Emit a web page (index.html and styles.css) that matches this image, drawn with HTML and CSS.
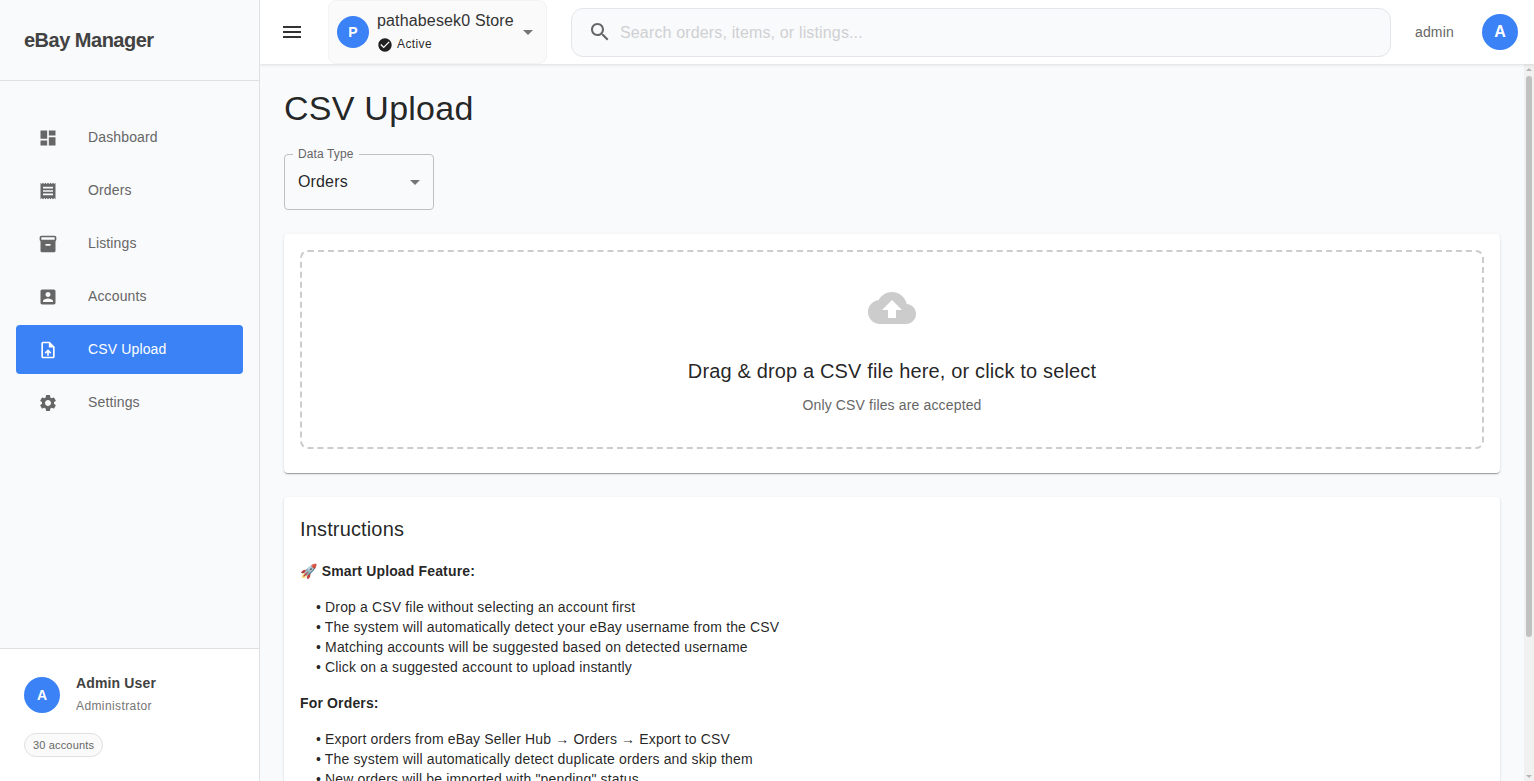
FILE: index.html
```
<!DOCTYPE html>
<html lang="en">
<head>
<meta charset="utf-8">
<title>eBay Manager</title>
<link rel="stylesheet" href="styles.css">
</head>
<body>
<div class="app">
  <aside class="sidebar">
    <div class="brand">eBay Manager</div>
    <nav class="nav">
      <a class="nav-item"><svg viewBox="0 0 24 24"><path d="M3 13h8V3H3v10zm0 8h8v-6H3v6zm10 0h8V11h-8v10zm0-18v6h8V3h-8z"/></svg><span>Dashboard</span></a>
      <a class="nav-item"><svg viewBox="0 0 24 24"><path d="M19.5 3.5 18 2l-1.500 1.500L15 2l-1.500 1.500L12 2l-1.500 1.500L9 2 7.500 3.500 6 2 4.500 3.500 3 2v20l1.500-1.500L6 22l1.500-1.500L9 22l1.500-1.500L12 22l1.500-1.500L15 22l1.500-1.500L18 22l1.500-1.500L21 22V2l-1.500 1.500zM18 17H6v-2h12v2zm0-4H6v-2h12v2zm0-4H6V7h12v2z"/></svg><span>Orders</span></a>
      <a class="nav-item"><svg viewBox="0 0 24 24"><path d="M20 2H4c-1 0-2 .9-2 2v3.010c0 .72.43 1.340 1 1.690V20c0 1.100 1.100 2 2 2h14c.9 0 2-.9 2-2V8.700c.57-.35 1-.97 1-1.690V4c0-1.100-1-2-2-2zm-5 12H9v-2h6v2zm5-7H4V4h16v3z"/></svg><span>Listings</span></a>
      <a class="nav-item"><svg viewBox="0 0 24 24"><path d="M3 5v14c0 1.100.89 2 2 2h14c1.100 0 2-.9 2-2V5c0-1.100-.9-2-2-2H5c-1.110 0-2 .9-2 2zm12 4c0 1.660-1.340 3-3 3s-3-1.340-3-3 1.340-3 3-3 3 1.340 3 3zm-9 8c0-2 4-3.100 6-3.100s6 1.100 6 3.100v1H6v-1z"/></svg><span>Accounts</span></a>
      <a class="nav-item selected"><svg viewBox="0 0 24 24"><path d="M14 2H6c-1.100 0-1.990.9-1.990 2L4 20c0 1.100.89 2 1.990 2H18c1.100 0 2-.9 2-2V8l-6-6zm4 18H6V4h7v5h5v11zM8 15.010l1.410 1.410L11 14.840V19h2v-4.160l1.590 1.590L16 15.010 12.010 11 8 15.010z"/></svg><span>CSV Upload</span></a>
      <a class="nav-item"><svg viewBox="0 0 24 24"><path d="M19.140 12.940c.04-.3.060-.61.060-.94 0-.32-.02-.64-.07-.94l2.030-1.580c.18-.14.230-.41.120-.61l-1.920-3.320c-.12-.22-.37-.29-.59-.22l-2.390.96c-.5-.38-1.030-.7-1.620-.94l-.36-2.540c-.04-.24-.24-.41-.48-.41h-3.840c-.24 0-.43.17-.47.41l-.36 2.540c-.59.24-1.130.57-1.620.94l-2.390-.96c-.22-.08-.47 0-.59.22L2.740 8.870c-.12.210-.08.470.120.610l2.030 1.580c-.05.300-.09.630-.09.940s.02.640.070.940l-2.030 1.580c-.18.140-.23.410-.12.610l1.920 3.320c.12.220.370.290.590.220l2.390-.96c.5.380 1.030.7 1.620.940l.36 2.540c.05.240.240.410.480.410h3.840c.24 0 .44-.17.470-.41l.36-2.540c.59-.24 1.130-.56 1.620-.94l2.390.96c.22.080.470 0 .59-.22l1.920-3.320c.12-.22.070-.47-.12-.61l-2.010-1.580zM12 15.600c-1.980 0-3.600-1.620-3.600-3.600s1.620-3.600 3.600-3.600 3.600 1.620 3.600 3.600-1.620 3.600-3.600 3.600z"/></svg><span>Settings</span></a>
    </nav>
    <div class="profile">
      <div class="profile-row">
        <div class="avatar avatar-profile">A</div>
        <div class="profile-text">
          <div class="profile-name">Admin User</div>
          <div class="profile-role">Administrator</div>
        </div>
      </div>
      <div class="chip">30 accounts</div>
    </div>
  </aside>

  <div class="workspace">
    <header class="topbar">
      <svg class="menu-icon" viewBox="0 0 24 24"><path d="M3 18h18v-2H3v2zm0-5h18v-2H3v2zm0-7v2h18V6H3z"/></svg>
      <div class="store">
        <div class="avatar avatar-store">P</div>
        <div class="store-text">
          <div class="store-name">pathabesek0 Store</div>
          <div class="store-status"><svg viewBox="0 0 24 24"><path d="M12 2C6.480 2 2 6.480 2 12s4.480 10 10 10 10-4.480 10-10S17.520 2 12 2zm-2 15-5-5 1.410-1.410L10 14.170l7.590-7.590L19 8l-9 9z"/></svg><span>Active</span></div>
        </div>
        <svg class="caret" viewBox="0 0 24 24"><path d="m7 10 5 5 5-5z"/></svg>
      </div>
      <div class="search">
        <svg viewBox="0 0 24 24"><path d="M15.500 14h-.79l-.28-.27C15.410 12.590 16 11.110 16 9.500 16 5.910 13.090 3 9.500 3S3 5.910 3 9.500 5.910 16 9.500 16c1.610 0 3.090-.59 4.230-1.570l.27.28v.79l5 4.990L20.490 19l-4.990-5zm-6 0C7.010 14 5 11.990 5 9.500S7.010 5 9.500 5 14 7.010 14 9.500 11.990 14 9.500 14z"/></svg>
        <span>Search orders, items, or listings...</span>
      </div>
      <div class="user-name">admin</div>
      <div class="avatar avatar-user">A</div>
    </header>

    <div class="viewport">
      <main class="content">
        <h1 class="page-title">CSV Upload</h1>
        <fieldset class="select">
          <legend>Data Type</legend>
          <span>Orders</span>
          <svg class="caret" viewBox="0 0 24 24"><path d="m7 10 5 5 5-5z"/></svg>
        </fieldset>
        <section class="card upload-card">
          <div class="dropzone">
            <svg viewBox="0 0 24 24"><path d="M19.350 10.040C18.670 6.590 15.640 4 12 4 9.110 4 6.600 5.640 5.350 8.040 2.340 8.360 0 10.910 0 14c0 3.310 2.690 6 6 6h13c2.760 0 5-2.240 5-5 0-2.640-2.050-4.780-4.650-4.960zM14 13v4h-4v-4H7l5-5 5 5h-3z"/></svg>
            <h2 class="drop-title">Drag &amp; drop a CSV file here, or click to select</h2>
            <p class="drop-note">Only CSV files are accepted</p>
          </div>
        </section>
        <section class="card instructions">
          <h2 class="section-title">Instructions</h2>
          <p class="topic"><span class="emoji">🚀</span> Smart Upload Feature:</p>
          <div class="steps">
            <p>• Drop a CSV file without selecting an account first</p>
            <p>• The system will automatically detect your eBay username from the CSV</p>
            <p>• Matching accounts will be suggested based on detected username</p>
            <p>• Click on a suggested account to upload instantly</p>
          </div>
          <p class="topic">For Orders:</p>
          <div class="steps">
            <p>• Export orders from eBay Seller Hub → Orders → Export to CSV</p>
            <p>• The system will automatically detect duplicate orders and skip them</p>
            <p>• New orders will be imported with "pending" status</p>
          </div>
        </section>
      </main>
      <div class="scrollbar">
        <svg viewBox="0 0 6 3"><path d="M0 3h6L3 0z"/></svg>
        <div class="thumb"></div>
        <svg class="down" viewBox="0 0 6 3"><path d="M0 0h6L3 3z"/></svg>
      </div>
    </div>
  </div>
</div>
</body>
</html>
```
FILE: styles.css
```
* { box-sizing: border-box; }
body, h1, h2, p { margin: 0; }
body {
  font-family: "Liberation Sans", Arial, sans-serif;
  color: rgba(0, 0, 0, 0.87);
  background: #f9fafc;
}
svg { display: block; fill: currentColor; flex-shrink: 0; }
.app { display: flex; height: 781px; overflow: hidden; }

.sidebar {
  position: relative;
  z-index: 1;
  width: 260px;
  flex-shrink: 0;
  display: flex;
  flex-direction: column;
  border-right: 1px solid #e0e0e0;
  background: #f9fafc;
}
.brand {
  height: 81px;
  padding-left: 24px;
  border-bottom: 1px solid #e0e0e0;
  font-size: 20px;
  font-weight: 700;
  line-height: 80px;
  letter-spacing: -0.5px;
  color: #424242;
}
.nav { flex: 1; padding: 32px 16px 0; }
.nav-item {
  display: flex;
  align-items: center;
  height: 49px;
  margin-bottom: 4px;
  padding-left: 22px;
  border-radius: 4px;
  font-size: 14px;
  letter-spacing: 0.14px;
  color: #666;
}
.nav-item svg { width: 20px; height: 20px; margin: 1px 30px 0 0; }
.nav-item span { padding-bottom: 2px; }
.nav-item.selected { background: #3b82f6; color: #fff; }
.profile {
  height: 133px;
  padding: 24px;
  border-top: 1px solid #e0e0e0;
  background: #fff;
}
.profile-row { display: flex; align-items: center; height: 44px; margin-bottom: 16px; }
.profile-text { margin-left: 16px; padding-bottom: 2px; }
.profile-name { font-size: 14px; font-weight: 700; line-height: 22px; letter-spacing: 0.15px; color: #424242; }
.profile-role { margin-top: 2px; font-size: 12px; line-height: 20px; letter-spacing: 0.4px; color: #757575; }
.chip {
  display: inline-flex;
  align-items: center;
  height: 24px;
  padding: 0 8px;
  border: 1px solid #e0e0e0;
  border-radius: 12px;
  background: #fafafa;
  font-size: 11px;
  letter-spacing: 0.16px;
  color: #666;
}
.avatar {
  display: flex;
  align-items: center;
  justify-content: center;
  flex-shrink: 0;
  width: 36px;
  height: 36px;
  border-radius: 50%;
  background: #3b82f6;
  color: #fff;
  font-size: 14px;
  font-weight: 700;
}

.workspace { flex: 1; min-width: 0; display: flex; flex-direction: column; }
.topbar {
  position: relative;
  display: flex;
  align-items: center;
  height: 64px;
  flex-shrink: 0;
  padding: 0 16px 0 20px;
  background: #fff;
  box-shadow: 0 1px 3px rgba(0, 0, 0, 0.12);
}
.menu-icon { width: 24px; height: 24px; color: #333; }
.store {
  display: flex;
  align-items: center;
  width: 219px;
  height: 64px;
  margin-left: 24px;
  padding-left: 8px;
  border: 1px solid #f3f3f3;
  border-radius: 8px;
  background: #fafafa;
}
.avatar-store { width: 32px; height: 32px; }
.store-text { width: 139px; margin-left: 8px; white-space: nowrap; }
.store-name { padding-top: 1px; font-size: 16px; line-height: 23px; letter-spacing: 0.15px; color: #333; }
.store-status { display: flex; align-items: center; height: 24px; font-size: 12px; letter-spacing: 0.4px; }
.store-status svg { width: 16px; height: 16px; margin: 1px 4px 0 0; }
.caret { width: 24px; height: 24px; color: #757575; }
.search {
  display: flex;
  align-items: center;
  flex: 1;
  height: 49px;
  margin: 1px 24px 0;
  padding-left: 16px;
  border: 1px solid #e2e5ea;
  border-radius: 12px;
  background: #f9fafc;
  font-size: 16px;
  letter-spacing: 0.15px;
  color: #cfd0d2;
}
.search svg { width: 24px; height: 24px; margin: -2px 8px 0 0; color: #666; }
.user-name { width: 67px; font-size: 14px; letter-spacing: 0.15px; color: #666; }
.avatar-user { font-size: 16px; }

.viewport { flex: 1; min-height: 0; display: flex; }
.content { flex: 1; min-width: 0; padding: 23px 24px 0; overflow: hidden; }
.page-title { margin-bottom: 18px; font-size: 34px; font-weight: 400; line-height: 42px; letter-spacing: 0.25px; }
.select {
  display: flex;
  align-items: center;
  justify-content: space-between;
  width: 150px;
  height: 63px;
  margin: 0 0 24px;
  padding: 0 6px 7px 13px;
  border: 1px solid #bfc0c2;
  border-radius: 4px;
  font-size: 16px;
  letter-spacing: 0.15px;
}
.select legend {
  margin-left: -5px;
  padding: 0 6px 0 5px;
  font-size: 12px;
  line-height: 14px;
  letter-spacing: 0.11px;
  color: #666;
}
.card {
  padding: 16px;
  border-radius: 4px;
  background: #fff;
  box-shadow: 0 2px 1px -1px rgba(0, 0, 0, 0.2), 0 1px 1px rgba(0, 0, 0, 0.14), 0 1px 3px rgba(0, 0, 0, 0.12);
}
.upload-card { height: 239px; margin-bottom: 24px; }
.dropzone {
  display: flex;
  flex-direction: column;
  align-items: center;
  height: 199px;
  padding-top: 32px;
  border: 2px dashed #ccc;
  border-radius: 8px;
}
.dropzone svg { width: 48px; height: 48px; margin-bottom: 23px; color: #ccc; }
.drop-title, .section-title { font-size: 20px; font-weight: 400; line-height: 32px; letter-spacing: 0.15px; }
.drop-note { margin-top: 8px; font-size: 14px; line-height: 20px; letter-spacing: 0.15px; color: #666; }
.instructions { height: 420px; font-size: 14px; line-height: 20px; letter-spacing: 0.15px; }
.topic { margin: 16px 0; font-weight: 700; }
.emoji { margin-right: 0.5px; }
.steps { padding-left: 16px; }

.scrollbar {
  display: flex;
  flex-direction: column;
  align-items: center;
  width: 10px;
  padding: 4px 0 3px;
  background: #f1f1f1;
}
.scrollbar svg { width: 6px; height: 3px; color: #b5b5b5; }
.thumb { width: 6px; height: 561px; margin-top: 5px; border-radius: 3px; background: #c1c1c1; }
.scrollbar .down { margin-top: auto; }
```
